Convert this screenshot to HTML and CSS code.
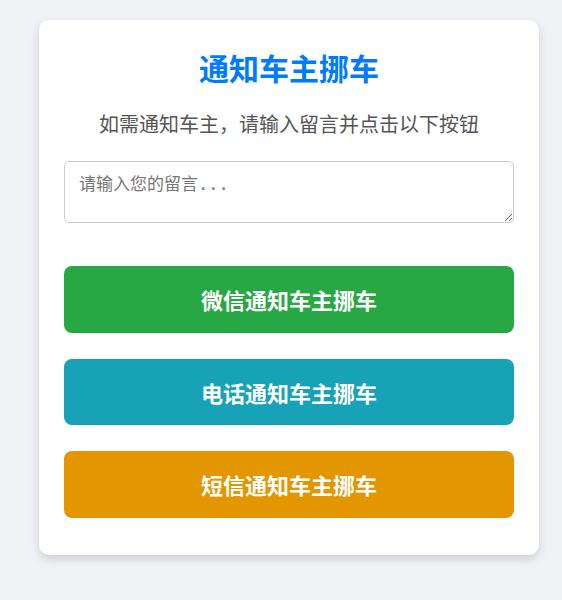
FILE: index.html
```html
<!DOCTYPE html>
<html lang="zh-CN">
<head>
    <meta charset="UTF-8">
    <meta name="viewport" content="width=device-width, initial-scale=1.0">
    <title>通知车主挪车</title>
    <link rel="stylesheet" href="styles.css">
</head>
<body>
    <div class="Card">
        <h1 class="Card__title">通知车主挪车</h1>
        <p class="Card__text">如需通知车主，请输入留言并点击以下按钮</p>

        <textarea class="Card__msg" placeholder="请输入您的留言..."></textarea>

        <div class="Card__btns">
            <button class="Btn Btn--wechat">微信通知车主挪车</button>
            <button class="Btn Btn--phone">电话通知车主挪车</button>
            <button class="Btn Btn--sms">短信通知车主挪车</button>
        </div>
    </div>
</body>
</html>
```

FILE: styles.css
```css
* {
    box-sizing: border-box;
}

body {
    margin: 0;
    padding: 20px 0 45px 39px;
    background: #f0f2f5;
    font-family: 'Noto Sans CJK SC', 'Noto Sans', sans-serif;
}

.Card {
    width: 500px;
    background: #fff;
    border-radius: 10px;
    padding: 25px 25px 37px;
    box-shadow: 0 4px 10px rgba(0, 0, 0, .15);
}

.Card__title {
    margin: 3px 0 0;
    text-align: center;
    color: #007bff;
    font-size: 30px;
    line-height: 38px;
    font-weight: bold;
}

.Card__text {
    margin: 24px 0 0;
    text-align: center;
    color: #555;
    font-size: 20px;
    line-height: 28px;
}

.Card__msg {
    display: block;
    width: 100%;
    height: 62px;
    margin-top: 23px;
    padding: 8px 14px;
    border: 1px solid #ccc;
    border-radius: 5px;
    font-family: 'DejaVu Sans Mono', 'Noto Sans CJK SC', monospace;
    font-size: 17px;
    resize: vertical;
}

.Card__msg::placeholder {
    color: #777;
}

.Card__btns {
    display: flex;
    flex-direction: column;
    gap: 26px;
    margin-top: 43px;
}

.Btn {
    height: 66.5px;
    border: none;
    border-radius: 8px;
    color: #fff;
    font-family: 'Noto Sans CJK SC', sans-serif;
    font-size: 22px;
    font-weight: bold;
    cursor: pointer;
}

.Btn--wechat {
    background: #28a745;
}

.Btn--phone {
    background: #17a2b8;
}

.Btn--sms {
    background: #e39600;
}
```
